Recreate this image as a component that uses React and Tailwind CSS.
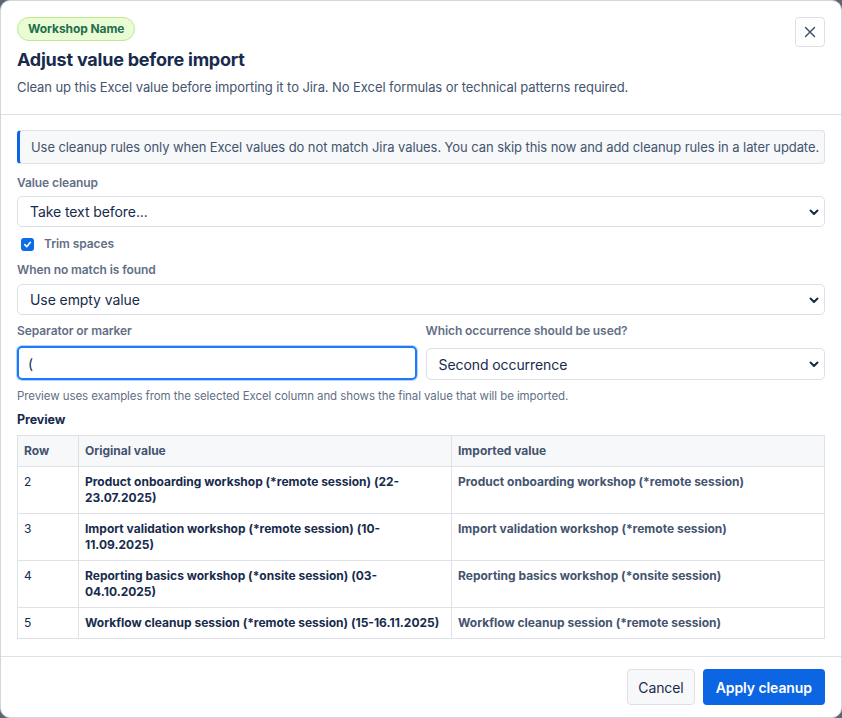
import React from "react";

const rows = [
  { row: 2, original: "Product onboarding workshop (*remote session) (22-23.07.2025)", imported: "Product onboarding workshop (*remote session)" },
  { row: 3, original: "Import validation workshop (*remote session) (10-11.09.2025)", imported: "Import validation workshop (*remote session)" },
  { row: 4, original: "Reporting basics workshop (*onsite session) (03-04.10.2025)", imported: "Reporting basics workshop (*onsite session)" },
  { row: 5, original: "Workflow cleanup session (*remote session) (15-16.11.2025)", imported: "Workflow cleanup session (*remote session)" },
];

function Chevron() {
  return (
    <svg width="12" height="12" viewBox="0 0 12 12" className="text-[#172b4d]">
      <path d="M2.5 4.5 6 8l3.5-3.5" fill="none" stroke="currentColor" strokeWidth="2" strokeLinecap="round" strokeLinejoin="round" />
    </svg>
  );
}

function Select({ value, className = "" }) {
  return (
    <div className={`flex items-center justify-between border border-[#dcdfe4] rounded-[5px] bg-white pl-[12px] pr-[4px] text-[14px] text-[#172b4d] ${className}`}>
      <span>{value}</span>
      <Chevron />
    </div>
  );
}

function Label({ children }) {
  return <div className="text-[12px] font-semibold text-[#626f86] leading-[16px]">{children}</div>;
}

export default function App() {
  return (
    <div className="w-[842px] h-[718px] bg-[#5e6573] font-['Inter','Noto_Sans',sans-serif] tracking-[-0.005em]">
      <div className="w-[842px] h-[718px] bg-white border border-[#d3d6dc] rounded-[10px] flex flex-col overflow-hidden">
        {/* header */}
        <div className="px-4 pt-4 pb-[18px] border-b border-[#dfe1e6] flex justify-between">
          <div className="flex flex-col items-start">
            <span className="px-[10px] py-[3px] rounded-full bg-[#eafcd3] border border-[#bfe88f] text-[12px] font-bold text-[#216e4e] leading-[16px]">
              Workshop Name
            </span>
            <h1 className="mt-[7px] text-[18px] font-bold text-[#172b4d] leading-[24px] tracking-[-0.012em]">Adjust value before import</h1>
            <p className="mt-[6px] text-[13px] text-[#44546f] leading-[18px]">
              Clean up this Excel value before importing it to Jira. No Excel formulas or technical patterns required.
            </p>
          </div>
          <button className="w-[30px] h-[30px] border border-[#dcdfe4] rounded-[4px] flex items-center justify-center text-[#44546f]">
            <svg width="12" height="12" viewBox="0 0 12 12">
              <path d="M1.5 1.5l9 9M10.5 1.5l-9 9" stroke="currentColor" strokeWidth="1.5" strokeLinecap="round" />
            </svg>
          </button>
        </div>

        {/* body */}
        <div className="flex-1 px-4 pt-[15px]">
          <div className="bg-[#f7f8f9] border border-[#dfe1e6] border-l-[3px] border-l-[#0c66e4] rounded-[4px] pl-[11px] pr-[6px] py-[8px] text-[13px] text-[#44546f] leading-[16px] whitespace-nowrap">
            Use cleanup rules only when Excel values do not match Jira values. You can skip this now and add cleanup rules in a later update.
          </div>

          <div className="mt-[11px]">
            <Label>Value cleanup</Label>
            <Select value="Take text before..." className="mt-[5px] h-[31px]" />
          </div>

          <label className="mt-[9px] flex items-center gap-[10px] pl-[4px] text-[12px] font-semibold text-[#626f86] leading-[16px]">
            <span className="w-[13px] h-[13px] rounded-[3px] bg-[#0b6ce5] flex items-center justify-center">
              <svg width="9" height="9" viewBox="0 0 10 10">
                <path d="M2 5.2 4.2 7.4 8.2 2.6" fill="none" stroke="white" strokeWidth="1.8" strokeLinecap="round" strokeLinejoin="round" />
              </svg>
            </span>
            Trim spaces
          </label>

          <div className="mt-[10px]">
            <Label>When no match is found</Label>
            <Select value="Use empty value" className="mt-[6px] h-[31px]" />
          </div>

          <div className="mt-[8px] grid grid-cols-2 gap-[9px]">
            <div>
              <Label>Separator or marker</Label>
              <div className="mt-[7px] h-[34px] rounded-[5px] border-2 border-[#1d7afc] shadow-[0_0_0_1px_#b3d4ff] flex items-center px-[9px] text-[14px] text-[#172b4d]">
                (
              </div>
            </div>
            <div>
              <Label>Which occurrence should be used?</Label>
              <Select value="Second occurrence" className="mt-[9px] h-[32px]" />
            </div>
          </div>

          <p className="mt-[9px] text-[11.5px] text-[#626f86] leading-[14px]">
            Preview uses examples from the selected Excel column and shows the final value that will be imported.
          </p>

          <div className="mt-[9px] text-[12.5px] font-bold text-[#172b4d] leading-[16px]">Preview</div>

          <table className="mt-[7px] w-full border-collapse text-[12px] leading-[16px] text-[#172b4d] tracking-normal">
            <thead>
              <tr className="bg-[#f7f8f9] text-[#44546f]">
                <th className="w-[61px] border border-[#dfe1e6] px-[6px] h-[31px] text-left font-bold">Row</th>
                <th className="w-[373px] border border-[#dfe1e6] px-[6px] text-left font-bold">Original value</th>
                <th className="border border-[#dfe1e6] px-[6px] text-left font-bold">Imported value</th>
              </tr>
            </thead>
            <tbody>
              {rows.map((r) => (
                <tr key={r.row}>
                  <td className="border border-[#dfe1e6] px-[6px] py-[7px] align-top">{r.row}</td>
                  <td className="border border-[#dfe1e6] px-[6px] py-[7px] align-top font-bold">
                    <div className="max-w-[362px]">{r.original}</div>
                  </td>
                  <td className="border border-[#dfe1e6] px-[6px] py-[7px] align-top font-bold text-[#44546f]">{r.imported}</td>
                </tr>
              ))}
            </tbody>
          </table>
        </div>

        {/* footer */}
        <div className="border-t border-[#dfe1e6] px-4 pt-[12px] pb-[12px] flex justify-end gap-[8px]">
          <button className="h-[36px] px-[10px] rounded-[4px] border border-[#dcdfe4] bg-[#f7f8f9] text-[14px] text-[#172b4d]">Cancel</button>
          <button className="h-[36px] px-[13px] rounded-[4px] bg-[#0c66e4] text-[14px] font-semibold text-white">Apply cleanup</button>
        </div>
      </div>
    </div>
  );
}
